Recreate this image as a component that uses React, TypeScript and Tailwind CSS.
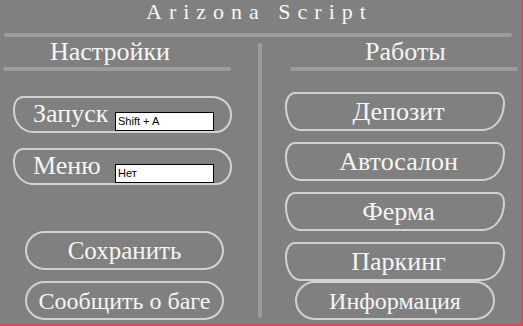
// App.tsx — окно настроек "Arizona Script"

const serif = "font-['Liberation_Serif','Times_New_Roman',serif]"

function HotkeyRow({ label, value, textPad }: { label: string; value: string; textPad: string }) {
  return (
    <div className="ml-[13px] flex h-[37px] w-[219px] items-start border-2 border-[#d2d2d2] rounded-[10px_20px_16px_20px/12px_18px_18px_22px]">
      <span className={`${textPad} mt-[1px] text-[26px] leading-[30px] text-[#f5f5f5]`}>{label}</span>
      <div className="mt-[14px] ml-auto mr-[16px] flex h-[19px] w-[99px] items-center border border-black bg-white px-[2px] font-['Liberation_Sans',Arial,sans-serif] text-[11px] text-black">
        {value}
      </div>
    </div>
  )
}

function PillButton({ label, size, className }: { label: string; size: string; className: string }) {
  return (
    <div className={`flex items-center justify-center border-2 border-[#d2d2d2] text-[#f5f5f5] leading-none ${size} ${className}`}>
      {label}
    </div>
  )
}

const jobShape = "ml-[23px] h-[39px] w-[220px] pl-[7px] rounded-[10px_8px_22px_15px/14px_10px_28px_24px]"

export default function App() {
  return (
    <div className={`${serif} h-[326px] w-[523px] bg-[#808080] border-r-2 border-b-2 border-[#e2454f] flex flex-col overflow-hidden`}>
      {/* заголовок */}
      <div className="pl-[146px] text-[22px] leading-[24px] tracking-[7px] text-[#f7f7f7]">Arizona Script</div>
      <div className="mt-[9px] ml-[4px] h-[4px] w-[508px] rounded-full bg-[#9c9c9c]" />

      <div className="mt-[6px] flex">
        {/* левая колонка */}
        <div className="flex w-[258px] flex-col">
          <div className="pl-[50px] text-[26px] leading-[18px] text-[#f5f5f5]">Настройки</div>
          <div className="mt-[6px] ml-[3px] h-[4px] w-[228px] rounded-full bg-[#9c9c9c]" />

          <div className="mt-[25px]">
            <HotkeyRow label="Запуск" value="Shift + A" textPad="pl-[18px]" />
          </div>
          <div className="mt-[15px]">
            <HotkeyRow label="Меню" value="Нет" textPad="pl-[18px]" />
          </div>

          <PillButton label="Сохранить" size="text-[25px]" className="mt-[46px] ml-[25px] h-[39px] w-[199px] rounded-[20px]" />
          <PillButton label="Сообщить о баге" size="text-[24px]" className="mt-[11px] ml-[25px] h-[39px] w-[199px] rounded-[20px]" />
        </div>

        {/* разделитель */}
        <div className="h-[275px] w-[4px] rounded-full bg-[#9c9c9c]" />

        {/* правая колонка */}
        <div className="flex flex-1 flex-col">
          <div className="pl-[103px] text-[26px] leading-[18px] text-[#f5f5f5]">Работы</div>
          <div className="mt-[6px] ml-[28px] h-[4px] w-[228px] rounded-full bg-[#9c9c9c]" />

          <PillButton label="Депозит" size="text-[26px]" className={`mt-[21px] ${jobShape}`} />
          <PillButton label="Автосалон" size="text-[26px]" className={`mt-[11px] ${jobShape}`} />
          <PillButton label="Ферма" size="text-[26px]" className={`mt-[11px] ${jobShape}`} />
          <PillButton label="Паркинг" size="text-[26px]" className={`mt-[11px] ${jobShape}`} />
          <PillButton label="Информация" size="text-[24px]" className="ml-[33px] h-[39px] w-[200px] rounded-[20px]" />
        </div>
      </div>
    </div>
  )
}
